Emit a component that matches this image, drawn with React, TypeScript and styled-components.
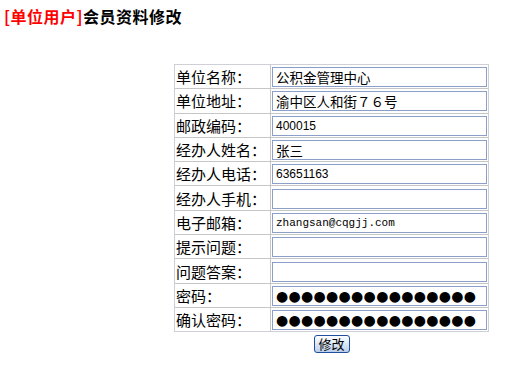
import React from "react";
import styled, { createGlobalStyle } from "styled-components";

const Global = createGlobalStyle`
  html, body { margin: 0; padding: 0; background: #fff; }
  body { font-family: "Noto Sans CJK SC", "Liberation Sans", sans-serif; color: #000; }
`;

const Page = styled.div`
  padding-top: 7px;
  width: 520px;
`;

const Title = styled.div`
  padding-left: 4px;
  font-size: 16px;
  font-weight: bold;
  line-height: 18px;
  letter-spacing: 0.5px;
  font-family: "Noto Sans CJK SC", sans-serif;
  color: #000;
`;

const Tag = styled.span`
  color: #ff0000;
`;

const FormWrap = styled.div`
  margin: 39px 0 0 174px;
  width: 315px;
`;

const Grid = styled.div`
  display: grid;
  grid-template-columns: 95px 217px;
  grid-auto-rows: 23.3px;
  gap: 1px;
  background: #c6c6c6;
  border: 1px solid #cfcfd6;
`;

const Label = styled.div`
  background: #fff;
  display: flex;
  align-items: center;
  padding-left: 1px;
  font-family: "Noto Sans CJK SC", sans-serif;
  font-size: 15px;
  white-space: nowrap;
  overflow: hidden;
`;

const Field = styled.div`
  background: #fff;
  display: flex;
  align-items: center;
  padding-left: 1px;
`;

type Kind = "cjk" | "num" | "mono" | "pass";

const fontFor = (k: Kind) => {
  switch (k) {
    case "cjk":
      return `font-family: "Noto Sans CJK SC", sans-serif; font-size: 13.5px;`;
    case "num":
      return `font-family: "Liberation Sans", sans-serif; font-size: 12px;`;
    case "mono":
      return `font-family: "Liberation Mono", monospace; font-size: 11px;`;
    case "pass":
      return `font-family: "DejaVu Sans", sans-serif; font-size: 14px; letter-spacing: 0.3px;`;
  }
};

const Input = styled.input<{ $kind: Kind }>`
  box-sizing: border-box;
  width: 215px;
  height: 20px;
  margin: 1px 0 0 0;
  border: 1px solid #8c9fc8;
  padding: 0 0 0 3px;
  background: #fff;
  color: #000;
  outline: none;
  ${(p) => fontFor(p.$kind)}
`;

const ButtonRow = styled.div`
  display: flex;
  justify-content: center;
  margin-top: 3px;
`;

const Button = styled.button`
  box-sizing: border-box;
  width: 36px;
  height: 18px;
  padding: 0;
  border: 1px solid #1f4f9a;
  border-radius: 3px;
  background: linear-gradient(#ffffff, #d5e2f3 60%, #b9cde9);
  font-family: "Noto Sans CJK SC", sans-serif;
  font-size: 13px;
  line-height: 16px;
  color: #000;
`;

const rows: { label: string; value: string; kind: Kind }[] = [
  { label: "单位名称：", value: "公积金管理中心", kind: "cjk" },
  { label: "单位地址：", value: "渝中区人和街７６号", kind: "cjk" },
  { label: "邮政编码：", value: "400015", kind: "num" },
  { label: "经办人姓名：", value: "张三", kind: "cjk" },
  { label: "经办人电话：", value: "63651163", kind: "num" },
  { label: "经办人手机：", value: "", kind: "num" },
  { label: "电子邮箱：", value: "zhangsan@cqgjj.com", kind: "mono" },
  { label: "提示问题：", value: "", kind: "cjk" },
  { label: "问题答案：", value: "", kind: "cjk" },
  { label: "密码：", value: "●".repeat(16), kind: "pass" },
  { label: "确认密码：", value: "●".repeat(16), kind: "pass" },
];

export default function App() {
  return (
    <Page>
      <Global />
      <Title>
        <Tag>[单位用户]</Tag>会员资料修改
      </Title>
      <FormWrap>
        <Grid>
          {rows.map((r) => (
            <React.Fragment key={r.label}>
              <Label>{r.label}</Label>
              <Field>
                <Input $kind={r.kind} defaultValue={r.value} readOnly />
              </Field>
            </React.Fragment>
          ))}
        </Grid>
        <ButtonRow>
          <Button type="button">修改</Button>
        </ButtonRow>
      </FormWrap>
    </Page>
  );
}
